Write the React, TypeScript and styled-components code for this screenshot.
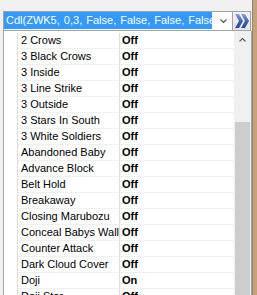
import { FC } from "react"
import styled, { createGlobalStyle } from "styled-components"

const GlobalStyle = createGlobalStyle`
    html, body {
        margin: 0;
        padding: 0;
        background: #f0f0f0;
        overflow: hidden;
    }
    body {
        font-family: "Liberation Sans", Arial, sans-serif;
        font-size: 11px;
        color: #000;
    }
`

const Screen = styled.div`
    display: flex;
    width: 257px;
    height: 295px;
    overflow: hidden;
`

const Panel = styled.div`
    width: 249px;
    padding: 11px 0 0 3px;
    display: flex;
    flex-direction: column;
    background: #f0f0f0;
`

const TopBar = styled.div`
    display: flex;
    height: 20px;
`

const Combo = styled.div`
    width: 228px;
    height: 18px;
    border: 1px solid #a3a3a3;
    background: #fff;
    display: flex;
    align-items: flex-start;
`

const ComboText = styled.div`
    width: 206px;
    height: 17px;
    line-height: 17px;
    padding-left: 2px;
    background: #3399ff;
    color: #fff;
    white-space: nowrap;
    overflow: hidden;
    word-spacing: 1px;
`

const ComboArrow = styled.div`
    flex: 1;
    height: 18px;
    display: flex;
    align-items: center;
    justify-content: center;
    padding-left: 2px;
`

const GoButton = styled.button`
    width: 18px;
    height: 20px;
    margin: 0;
    padding: 0;
    border: 1px solid #a3a3a3;
    border-left: none;
    background: linear-gradient(#f4f4f4, #e4e4e4);
    display: flex;
    align-items: center;
    justify-content: center;
`

const List = styled.div`
    flex: 1;
    display: flex;
    border-left: 1px solid #a3a3a3;
    border-right: 1px solid #a3a3a3;
    background: #fff;
    overflow: hidden;
`

const Grid = styled.div`
    width: 230px;
    padding-top: 2px;
`

const Row = styled.div`
    display: flex;
    height: 16px;
`

const Gutter = styled.div`
    width: 13px;
    border-right: 1px solid #dedede;
`

const Cell = styled.div<{ $bold?: boolean; $width: number }>`
    width: ${p => p.$width}px;
    height: 15px;
    line-height: 15px;
    padding-left: ${p => (p.$bold ? 2 : 3)}px;
    font-weight: ${p => (p.$bold ? "bold" : "normal")};
    border-bottom: 1px solid #f0f0f0;
    white-space: nowrap;
    overflow: hidden;
`

const NameCell = styled(Cell)`
    border-right: 1px solid #dedede;
`

const ScrollBar = styled.div`
    width: 17px;
    background: #f0f0f0;
    display: flex;
    flex-direction: column;
`

const ScrollButton = styled.div`
    height: 17px;
    display: flex;
    align-items: center;
    justify-content: center;
`

const ScrollGap = styled.div`
    height: 74px;
`

const Thumb = styled.div`
    flex: 1;
    margin: 0 1px;
    background: #cdcdcd;
`

const Backdrop = styled.div`
    width: 4px;
    border-left: 1px solid #8f8378;
    background: #c6a17b;
`

const patterns: [string, string][] = [
    ["2 Crows", "Off"],
    ["3 Black Crows", "Off"],
    ["3 Inside", "Off"],
    ["3 Line Strike", "Off"],
    ["3 Outside", "Off"],
    ["3 Stars In South", "Off"],
    ["3 White Soldiers", "Off"],
    ["Abandoned Baby", "Off"],
    ["Advance Block", "Off"],
    ["Belt Hold", "Off"],
    ["Breakaway", "Off"],
    ["Closing Marubozu", "Off"],
    ["Conceal Babys Wall", "Off"],
    ["Counter Attack", "Off"],
    ["Dark Cloud Cover", "Off"],
    ["Doji", "On"],
    ["Doji Star", "Off"],
]

const App: FC = () => {
    return (
        <>
            <GlobalStyle />
            <Screen>
                <Panel>
                    <TopBar>
                        <Combo>
                            <ComboText>Cdl(ZWK5, 0,3, False, False, False, False, False)</ComboText>
                            <ComboArrow>
                                <svg width="7" height="4" viewBox="0 0 7 4">
                                    <path d="M0.5 0.5 L3.5 3.5 L6.5 0.5" fill="none" stroke="#555" strokeWidth="1.2" />
                                </svg>
                            </ComboArrow>
                        </Combo>
                        <GoButton>
                            <svg width="14" height="14" viewBox="0 0 14 14">
                                <defs>
                                    <linearGradient id="chev" x1="0" y1="0" x2="0" y2="1">
                                        <stop offset="0" stopColor="#8aa6e0" />
                                        <stop offset="0.5" stopColor="#3f63b8" />
                                        <stop offset="1" stopColor="#2a4a9a" />
                                    </linearGradient>
                                </defs>
                                <path d="M0 0 L4 0 L8 7 L4 14 L0 14 L4 7 Z" fill="url(#chev)" />
                                <path d="M6 0 L10 0 L14 7 L10 14 L6 14 L10 7 Z" fill="url(#chev)" />
                            </svg>
                        </GoButton>
                    </TopBar>
                    <List>
                        <Grid>
                            {patterns.map(([name, value]) => (
                                <Row key={name}>
                                    <Gutter />
                                    <NameCell $width={98}>{name}</NameCell>
                                    <Cell $width={112} $bold>{value}</Cell>
                                </Row>
                            ))}
                        </Grid>
                        <ScrollBar>
                            <ScrollButton>
                                <svg width="7" height="4" viewBox="0 0 7 4">
                                    <path d="M0.5 3.5 L3.5 0.5 L6.5 3.5" fill="none" stroke="#606060" strokeWidth="1.2" />
                                </svg>
                            </ScrollButton>
                            <ScrollGap />
                            <Thumb />
                        </ScrollBar>
                    </List>
                </Panel>
                <Backdrop />
            </Screen>
        </>
    )
}

export default App
